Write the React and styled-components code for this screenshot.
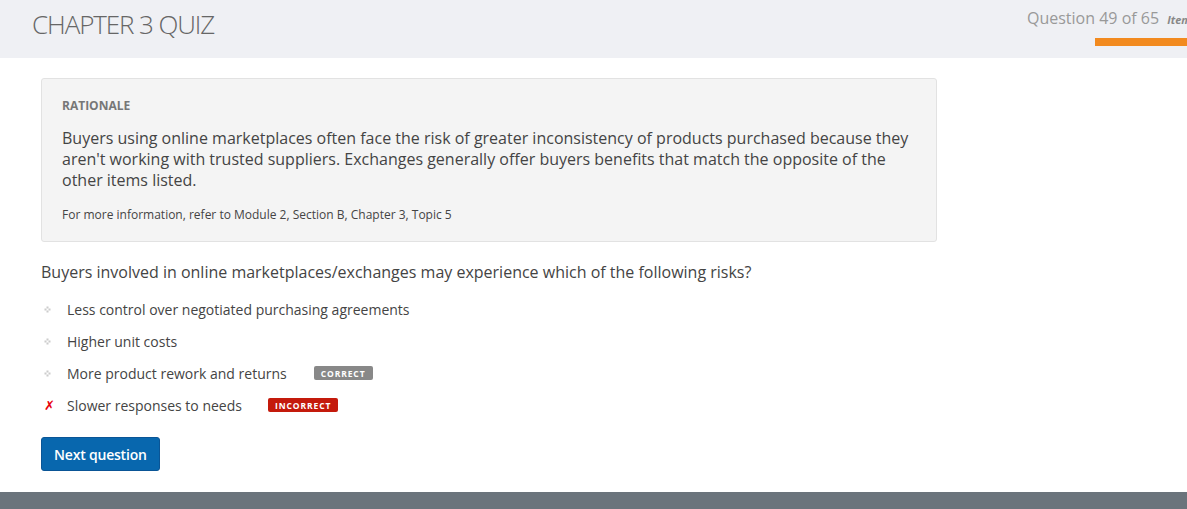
import React from "react";
import styled, { createGlobalStyle } from "styled-components";

const GlobalStyle = createGlobalStyle`
  html, body {
    margin: 0;
    padding: 0;
    background: #fff;
    overflow: hidden;
  }
  body {
    font-family: "Open Sans", "Liberation Sans", sans-serif;
    color: #333;
  }
`;

const Page = styled.div`
  display: flex;
  flex-direction: column;
  min-height: 509px;
`;

const Header = styled.header`
  display: flex;
  height: 58px;
  background: #eff0f4;
  overflow: hidden;
`;

const Title = styled.h1`
  flex: 1;
  margin: 0;
  padding: 8px 0 0 32px;
  font-size: 26px;
  line-height: 32px;
  font-weight: 300;
  letter-spacing: -1.1px;
  color: #666;
`;

const Progress = styled.div`
  flex: 0 0 160px;
  min-width: 0;
  display: flex;
  flex-direction: column;
  padding-top: 8px;
`;

const ProgressText = styled.div`
  display: flex;
  align-items: baseline;
  gap: 8px;
  white-space: nowrap;
  font-size: 16px;
  line-height: 20px;
  color: #999;
`;

const ItemId = styled.span`
  font-size: 11px;
  font-style: italic;
  font-weight: 700;
  color: #888;
`;

const ProgressBar = styled.div`
  margin: 8px 0 0 68px;
  height: 8px;
  background: #f28a1f;
`;

const Main = styled.main`
  flex: 1;
  padding: 20px 0 21px 41px;
`;

const Rationale = styled.section`
  width: 896px;
  box-sizing: border-box;
  padding: 19px 20px 18px;
  background: #f4f4f4;
  border: 1px solid #e2e2e2;
  border-radius: 3px;
`;

const RationaleLabel = styled.div`
  font-size: 12px;
  line-height: 16px;
  font-weight: 700;
  color: #777;
`;

const RationaleText = styled.p`
  margin: 14px 0 0;
  font-size: 16px;
  line-height: 21px;
  color: #444;
`;

const RationaleRef = styled.p`
  margin: 16px 0 0;
  font-size: 12px;
  line-height: 16px;
  color: #444;
`;

const Question = styled.p`
  margin: 19px 0 10px;
  font-size: 16px;
  line-height: 22px;
  color: #444;
`;

const Options = styled.ul`
  margin: 0;
  padding: 0;
  list-style: none;
`;

const Option = styled.li`
  display: flex;
  align-items: center;
  height: 32px;
  font-size: 14px;
  color: #444;
`;

const Marker = styled.span`
  width: 26px;
  display: flex;
  align-items: center;
  padding-left: 3px;
  box-sizing: border-box;
`;

const Cross = styled.span`
  color: #e8000b;
  font-family: "DejaVu Sans", sans-serif;
  font-size: 13px;
  font-weight: 700;
  font-style: italic;
`;

const Badge = styled.span`
  margin-left: ${(p) => p.$gap}px;
  height: 14px;
  padding: 0 7px;
  display: inline-flex;
  align-items: center;
  border-radius: 2px;
  background: ${(p) => (p.$ok ? "#888" : "#c41a0c")};
  color: #fff;
  font-size: 8.5px;
  font-weight: 700;
  letter-spacing: 0.9px;
`;

const NextButton = styled.button`
  margin-top: 16px;
  height: 34px;
  padding: 0 12px;
  border: 1px solid #0a5596;
  border-radius: 3px;
  background: #0867ae;
  color: #fff;
  font-family: "Open Sans", "Liberation Sans", sans-serif;
  font-size: 14px;
  font-weight: 600;
  letter-spacing: -0.2px;
`;

const Footer = styled.footer`
  height: 18px;
  background: #6b747c;
`;

const Dots = () => (
  <svg width="7" height="7" viewBox="0 0 7 7">
    <rect x="2.5" y="0.5" width="2" height="2" fill="#ccc" />
    <rect x="0.5" y="2.5" width="2" height="2" fill="#ccc" />
    <rect x="4.5" y="2.5" width="2" height="2" fill="#ccc" />
    <rect x="2.5" y="4.5" width="2" height="2" fill="#ccc" />
  </svg>
);

const options = [
  { text: "Less control over negotiated purchasing agreements" },
  { text: "Higher unit costs" },
  { text: "More product rework and returns", badge: "CORRECT", ok: true, gap: 27 },
  { text: "Slower responses to needs", badge: "INCORRECT", wrong: true, gap: 26 },
];

export default function App() {
  return (
    <Page>
      <GlobalStyle />
      <Header>
        <Title>CHAPTER 3 QUIZ</Title>
        <Progress>
          <ProgressText>
            Question 49 of 65 <ItemId>Item ID: 1047</ItemId>
          </ProgressText>
          <ProgressBar />
        </Progress>
      </Header>
      <Main>
        <Rationale>
          <RationaleLabel>RATIONALE</RationaleLabel>
          <RationaleText>
            Buyers using online marketplaces often face the risk of greater
            inconsistency of products purchased because they aren't working with
            trusted suppliers. Exchanges generally offer buyers benefits that
            match the opposite of the other items listed.
          </RationaleText>
          <RationaleRef>
            For more information, refer to Module 2, Section B, Chapter 3, Topic 5
          </RationaleRef>
        </Rationale>
        <Question>
          Buyers involved in online marketplaces/exchanges may experience which
          of the following risks?
        </Question>
        <Options>
          {options.map((o) => (
            <Option key={o.text}>
              <Marker>{o.wrong ? <Cross>✗</Cross> : <Dots />}</Marker>
              {o.text}
              {o.badge && (
                <Badge $ok={o.ok} $gap={o.gap}>
                  {o.badge}
                </Badge>
              )}
            </Option>
          ))}
        </Options>
        <NextButton>Next question</NextButton>
      </Main>
      <Footer />
    </Page>
  );
}
